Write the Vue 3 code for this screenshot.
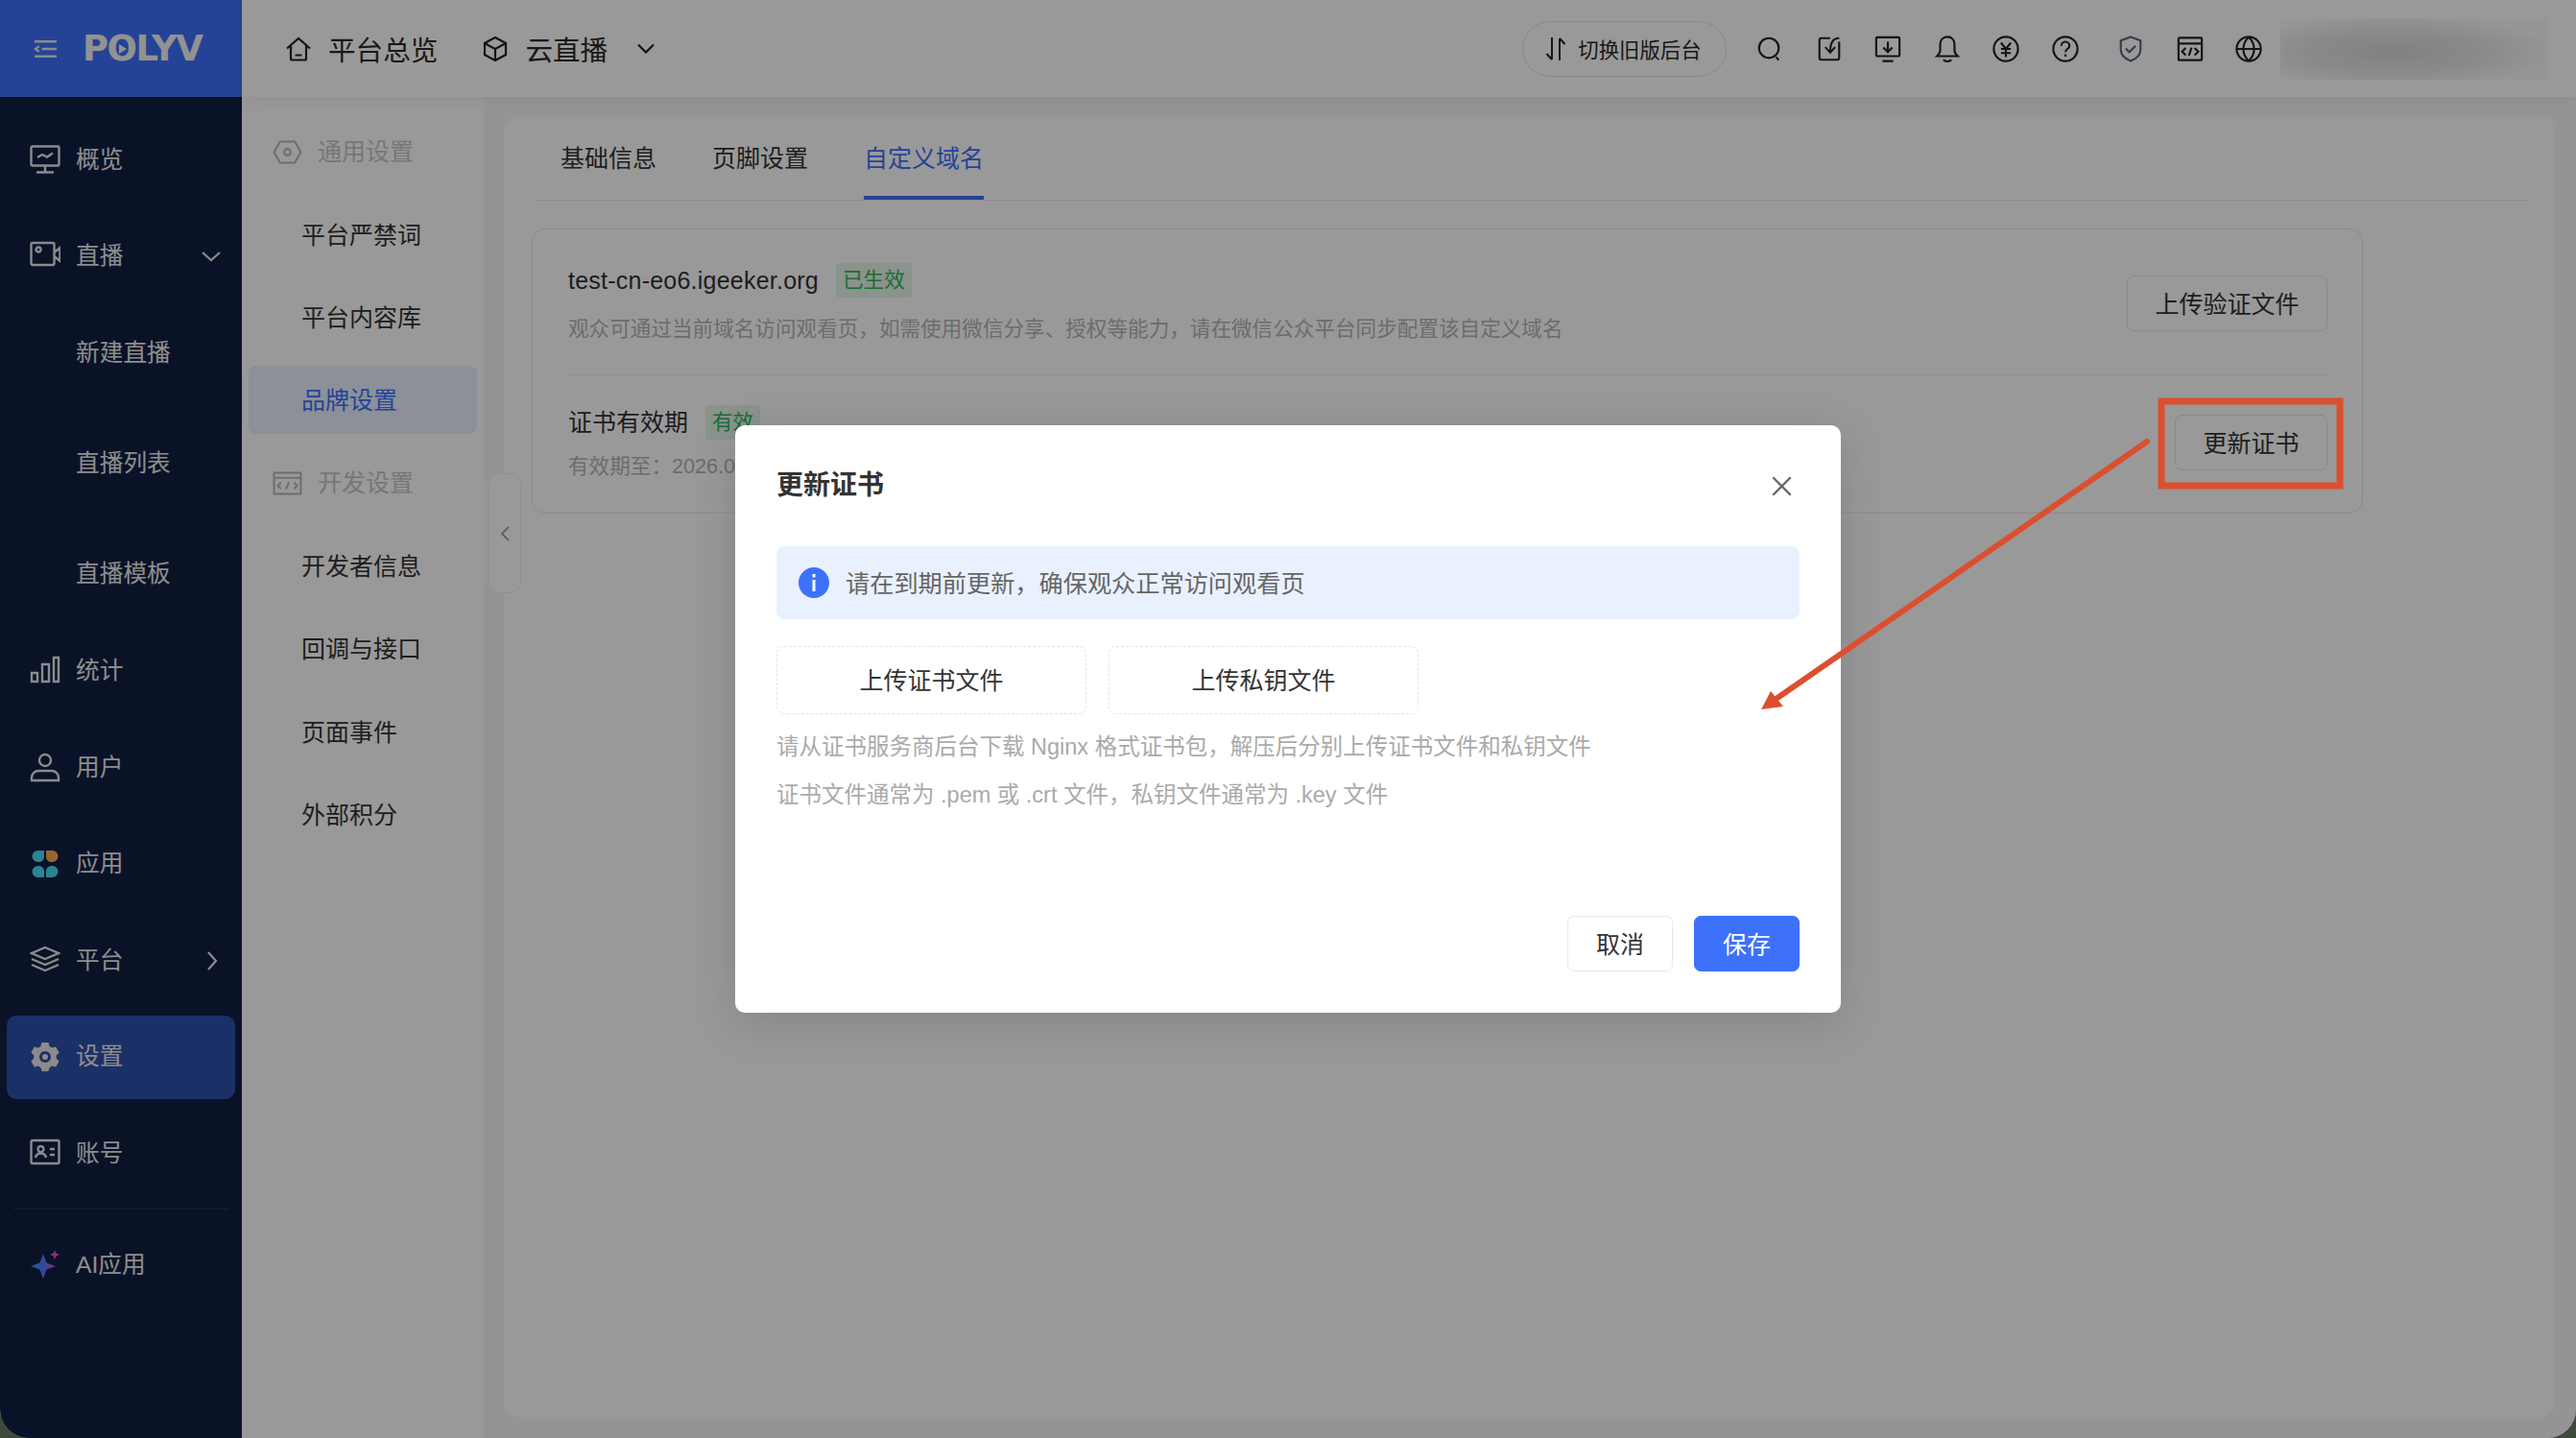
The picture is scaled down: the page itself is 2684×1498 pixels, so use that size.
<template>
  <div class="window">
    <aside class="sidebar">
      <div class="brand">
        <svg class="brand-menu" viewBox="0 0 26 22"><path d="M1 3h24M9 11h16M1 19h24M6 8l-4 3 4 3" /></svg>
        <span class="brand-name">POLYV</span>
      </div>
      <nav class="side-nav">
        <template v-for="item in sideItems" :key="item.label">
          <div class="side-item" :class="{ active: item.active }">
            <svg v-if="item.icon === 'apps'" class="side-icon" viewBox="0 0 32 32">
              <path class="teal" :d="petal" />
              <path class="orange" :d="petal" transform="matrix(-1 0 0 1 32 0)" />
              <path class="teal" :d="petal" transform="matrix(1 0 0 -1 0 32)" />
              <path class="teal" :d="petal" transform="matrix(-1 0 0 -1 32 32)" />
            </svg>
            <svg v-else-if="item.icon === 'gear'" class="side-icon" viewBox="0 0 32 32">
              <path class="gear" fill-rule="evenodd" d="M12.600 1h6.800l1.200 4 2.600 1.500 4-1 3.400 5.900-2.900 3v3.200l2.900 3-3.400 5.900-4-1-2.600 1.500-1.200 4h-6.800l-1.200-4-2.600-1.500-4 1-3.400-5.900 2.900-3v-3.200l-2.900-3 3.400-5.900 4 1 2.600-1.500zM16 10a6 6 0 1 0 0 12 6 6 0 0 0 0-12z" />
              <circle class="gear-hole" cx="16" cy="16" r="3" />
            </svg>
            <svg v-else-if="item.icon === 'spark'" class="side-icon" viewBox="0 0 32 32">
              <defs>
                <linearGradient id="sparkFill" x1="0" x2="1" y1="0.500" y2="0.500">
                  <stop offset="0" stop-color="#4f8cff" />
                  <stop offset="0.500" stop-color="#4f7cff" />
                  <stop offset="1" stop-color="#c04be0" />
                </linearGradient>
              </defs>
              <path class="spark" fill="url(#sparkFill)" d="M14 4l3.500 9.500L27 17l-9.500 3.500L14 30l-3.500-9.500L1 17l9.500-3.500z" />
              <path class="spark" fill="#e050d0" d="M26 0l1.500 3.500L31 5l-3.500 1.500L26 10l-1.500-3.500L21 5l3.500-1.500z" />
            </svg>
            <svg v-else class="side-icon" viewBox="0 0 32 32"><path :d="sideIcons[item.icon]" /></svg>
            <span class="side-label">{{ item.label }}</span>
            <svg v-if="item.open" class="side-caret" viewBox="0 0 20 12"><path d="M1 2l9 8 9-8" /></svg>
            <svg v-if="item.more" class="side-caret more" viewBox="0 0 12 20"><path d="M2 1l8 9-8 9" /></svg>
          </div>
          <div v-if="item.children" class="side-sub">
            <div v-for="child in item.children" :key="child" class="side-sub-item">{{ child }}</div>
          </div>
          <div v-if="item.rule" class="side-rule"></div>
        </template>
      </nav>
    </aside>

    <div class="main">
      <header class="topbar">
        <div class="top-link">
          <svg class="top-link-icon" viewBox="0 0 26 26"><path d="M1 12.500L13 2l12 10.500M5 10v13a1.500 1.500 0 0 0 1.500 1.500h13A1.500 1.500 0 0 0 21 23V10M9.500 19.500h7" /></svg>
          <span>平台总览</span>
        </div>
        <div class="top-link second">
          <svg class="top-link-icon" viewBox="0 0 26 26"><path d="M13 1l11 6v12l-11 6-11-6V7zM2 7l11 6 11-6M13 13v12" /></svg>
          <span>云直播</span>
          <svg class="top-caret" viewBox="0 0 18 11"><path d="M1 1.500l8 8 8-8" /></svg>
        </div>
        <div class="top-right">
          <div class="old-switch">
            <svg viewBox="0 0 22 26"><path d="M7 1v23M7 24l-5.500-6M15 25V2M15 2l5.500 6" /></svg>
            <span>切换旧版后台</span>
          </div>
          <div v-for="icon in topIcons" :key="icon.name" class="top-icon" :class="icon.name">
            <svg viewBox="0 0 30 30"><path :d="icon.d" /></svg>
          </div>
          <div class="account-blur"></div>
        </div>
      </header>

      <div class="body">
        <aside class="subnav">
          <template v-for="group in subGroups" :key="group.title">
            <div class="sub-title">
              <svg viewBox="0 0 32 26"><path :d="group.icon" /></svg>
              <span>{{ group.title }}</span>
            </div>
            <div
              v-for="link in group.links"
              :key="link"
              class="sub-link"
              :class="{ active: link === '品牌设置' }"
            >{{ link }}</div>
          </template>
        </aside>
        <div class="collapse-handle">
          <svg viewBox="0 0 10 18"><path d="M9 1L1 9l8 8" /></svg>
        </div>

        <section class="panel">
          <div class="tabs">
            <div class="tab">基础信息</div>
            <div class="tab">页脚设置</div>
            <div class="tab current">自定义域名</div>
          </div>
          <div class="card">
            <div class="card-row first">
              <div>
                <div class="row-title">
                  <span class="domain">test-cn-eo6.igeeker.org</span>
                  <em class="tag">已生效</em>
                </div>
                <p class="row-desc">观众可通过当前域名访问观看页，如需使用微信分享、授权等能力，请在微信公众平台同步配置该自定义域名</p>
              </div>
              <button class="btn wide">上传验证文件</button>
            </div>
            <div class="card-row second">
              <div>
                <div class="row-title">
                  <span>证书有效期</span>
                  <em class="tag">有效</em>
                </div>
                <p class="row-desc close">有效期至：2026.09.18</p>
              </div>
              <button class="btn">更新证书</button>
            </div>
          </div>
        </section>
      </div>
    </div>

    <div class="mask">
      <div class="dialog">
        <div class="dialog-head">
          <h2>更新证书</h2>
          <svg viewBox="0 0 20 20"><path d="M2 2l16 16M18 2L2 18" /></svg>
        </div>
        <div class="notice">
          <svg viewBox="0 0 32 32">
            <circle cx="16" cy="16" r="16" fill="#3e71fa" />
            <rect x="14.500" y="7" width="3" height="3.500" fill="#fff" />
            <rect x="14.500" y="13" width="3" height="12" fill="#fff" />
          </svg>
          <span>请在到期前更新，确保观众正常访问观看页</span>
        </div>
        <div class="uploads">
          <div class="upload">上传证书文件</div>
          <div class="upload">上传私钥文件</div>
        </div>
        <div class="hints">
          <p>请从证书服务商后台下载 Nginx 格式证书包，解压后分别上传证书文件和私钥文件</p>
          <p>证书文件通常为 .pem 或 .crt 文件，私钥文件通常为 .key 文件</p>
        </div>
        <div class="dialog-foot">
          <button class="foot-btn">取消</button>
          <button class="foot-btn primary">保存</button>
        </div>
      </div>
    </div>

    <!-- 红色标注 -->
    <svg class="markup" viewBox="0 0 2684 1498">
      <rect x="2252" y="418" width="186" height="88" />
      <line x1="2237" y1="460" x2="1852" y2="727" />
      <polygon points="1835,739 1845,720 1858,736" />
    </svg>
  </div>
</template>

<script setup>
const petal = 'M8.500 2H15v6.500a5.500 5.500 0 0 1-5.500 5.500h-1a6 6 0 0 1 0-12z'

const sideIcons = {
  monitor: 'M3 1.500h26a1.500 1.500 0 0 1 1.500 1.500v17a1.500 1.500 0 0 1-1.500 1.500H3A1.500 1.500 0 0 1 1.500 20V3A1.500 1.500 0 0 1 3 1.500zM16 21.500V28M7 28.500h18M8 13l5-3 5 2.500 6-4',
  camera: 'M3 2h21a1.500 1.500 0 0 1 1.500 1.500v20a1.500 1.500 0 0 1-1.500 1.500H3a1.500 1.500 0 0 1-1.500-1.500v-20A1.500 1.500 0 0 1 3 2zM25.500 12l6-5v14l-6-5M9 6.500a2.500 2.500 0 1 0 0 5 2.500 2.500 0 0 0 0-5z',
  chart: 'M2 18h6v9H2zM13 9h7v18h-7zM25 2h5v25h-5z',
  user: 'M16 2a6 6 0 1 0 0 12 6 6 0 0 0 0-12zM2 29v-3a7 7 0 0 1 7-7h14a7 7 0 0 1 7 7v3z',
  layers: 'M16 2l14 6-14 6-14-6zM2 14l14 6 14-6M2 20l14 6 14-6',
  card: 'M3 2h26a1.500 1.500 0 0 1 1.500 1.500v21a1.500 1.500 0 0 1-1.500 1.500H3a1.500 1.500 0 0 1-1.500-1.500v-21A1.500 1.500 0 0 1 3 2zM11.500 8a3 3 0 1 0 0 6 3 3 0 0 0 0-6zM6 20c.5-3 3-4.500 5.500-4.500S16.500 17 17 20M21 11h5M21 17h5'
}

const sideItems = [
  { label: '概览', icon: 'monitor' },
  { label: '直播', icon: 'camera', open: true, children: ['新建直播', '直播列表', '直播模板'] },
  { label: '统计', icon: 'chart' },
  { label: '用户', icon: 'user' },
  { label: '应用', icon: 'apps' },
  { label: '平台', icon: 'layers', more: true },
  { label: '设置', icon: 'gear', active: true },
  { label: '账号', icon: 'card', rule: true },
  { label: 'AI应用', icon: 'spark' }
]

const topIcons = [
  { name: 'search', d: 'M14 3a11 11 0 1 0 0 22 11 11 0 0 0 0-22zM22 24l3 3.500' },
  { name: 'tasks', d: 'M16 3H6a2 2 0 0 0-2 2v20a2 2 0 0 0 2 2h18a2 2 0 0 0 2-2V7M26 3c-7 0-10 5-10 15M10.500 13l5.500 6 5.500-6' },
  { name: 'down', d: 'M3 2h24a1 1 0 0 1 1 1v19a1 1 0 0 1-1 1H3a1 1 0 0 1-1-1V3a1 1 0 0 1 1-1zM15 7v11M10 13.500l5 5 5-5M9 28.500h12' },
  { name: 'bell', d: 'M15 1.500c-5 0-8 3.500-8 9v6c0 3-2 5-3.500 6.500h23c-1.500-1.500-3.500-3.500-3.500-6.500v-6c0-5.500-3-9-8-9zM10.500 27c2.500 2.500 6.500 2.500 9 0' },
  { name: 'yen', d: 'M15 1.500a13.500 13.500 0 1 0 0 27 13.500 13.500 0 0 0 0-27zM9.500 8l5.500 7 5.500-7M15 15v9M9.500 15h11M9.500 19.500h11' },
  { name: 'help', d: 'M15 1.500a13.500 13.500 0 1 0 0 27 13.500 13.500 0 0 0 0-27zM10.500 11.500c0-2.500 2-4.500 4.500-4.500s4.500 2 4.500 4.500c0 3.500-4.500 3.500-4.500 7M15 21v2.500' },
  { name: 'shield', d: 'M15 1.500l11 4v10c0 6-5 10.500-11 13-6-2.500-11-7-11-13v-10zM9.500 14.500l4 4 7-7' },
  { name: 'code', d: 'M3 2.500h24a1 1 0 0 1 1 1v23a1 1 0 0 1-1 1H3a1 1 0 0 1-1-1v-23a1 1 0 0 1 1-1zM2 9h26M10 14l-4 4 4 4M20 14l4 4-4 4M16.500 13.500l-3 9' },
  { name: 'globe', d: 'M15 1.500a13.500 13.500 0 1 0 0 27 13.500 13.500 0 0 0 0-27zM15 1.500c-8 8-8 19 0 27 8-8 8-19 0-27zM1.500 15h27' }
]

const subGroups = [
  {
    title: '通用设置',
    icon: 'M8 1.500h16L30.500 13 24 24.500H8L1.500 13zM16 9.500a3.500 3.500 0 1 0 0 7 3.500 3.500 0 0 0 0-7z',
    links: ['平台严禁词', '平台内容库', '品牌设置']
  },
  {
    title: '开发设置',
    icon: 'M2 1.500h28a.5.5 0 0 1 .5.5v22a.5.5 0 0 1-.5.5H2a.5.5 0 0 1-.5-.5V2a.5.5 0 0 1 .5-.5zM1.500 7h29M9 12l-3.500 3.500L9 19M23 12l3.500 3.500L23 19M17.500 11.500l-3 8',
    links: ['开发者信息', '回调与接口', '页面事件', '外部积分']
  }
]
</script>

<style>
html,
body {
  margin: 0;
  background: #3d4a3c;
}
</style>

<style scoped>
.window {
  position: relative;
  display: flex;
  width: 2684px;
  height: 1498px;
  overflow: hidden;
  border-radius: 0 0 30px 30px;
  background: #f7f7f8;
  font-family: "Liberation Sans", "Noto Sans CJK SC", sans-serif;
  font-size: 25px;
  color: #333;
}

/* 左侧主导航 */
.sidebar {
  flex: none;
  width: 252px;
  background: #111e43;
  color: #ececec;
}

.brand {
  display: flex;
  align-items: center;
  gap: 26px;
  height: 101px;
  padding-left: 35px;
  box-sizing: border-box;
  background: #3e71fa;
}

.brand-menu {
  width: 25px;
  height: 22px;
  fill: none;
  stroke: #e8e8e8;
  stroke-width: 2.500;
}

.brand-name {
  position: relative;
  font-family: "DejaVu Sans", sans-serif;
  font-size: 37px;
  font-weight: 700;
  line-height: 40px;
  letter-spacing: -1.500px;
  color: #f4f4f4;
}

/* O 里的播放三角 */
.brand-name::after {
  content: "";
  position: absolute;
  top: 15px;
  left: 38px;
  border-top: 5px solid transparent;
  border-bottom: 5px solid transparent;
  border-left: 8px solid #f4f4f4;
}

.side-nav {
  display: flex;
  flex-direction: column;
  gap: 14px;
  padding-top: 22.500px;
}

.side-item {
  display: flex;
  align-items: center;
  flex: none;
  height: 86.600px;
  margin: 0 7px;
  padding-left: 24px;
  border-radius: 10px;
  box-sizing: border-box;
  font-size: 24.700px;
}

.side-item.active {
  background: #2f50ad;
}

.side-icon {
  flex: none;
  width: 32px;
  height: 32px;
  margin-right: 16px;
  fill: none;
  stroke: #e8e8e8;
  stroke-width: 2.400;
}

.side-icon .teal {
  fill: #46dcf4;
  stroke: none;
}

.side-icon .orange {
  fill: #ffab55;
  stroke: none;
}

.side-icon .gear {
  fill: #e8e8e8;
  stroke: none;
}

.side-icon .gear-hole {
  fill: #e8e8e8;
  stroke: none;
}

.side-icon .spark {
  stroke: none;
}

.side-label {
  line-height: 34px;
}

.side-caret {
  width: 20px;
  height: 12px;
  margin-left: auto;
  margin-right: 15px;
  fill: none;
  stroke: #e8e8e8;
  stroke-width: 2.200;
}

.side-caret.more {
  width: 12px;
  height: 20px;
  margin-right: 18px;
}

.side-sub {
  margin: -14px 0;
}

.side-sub-item {
  height: 115px;
  padding-left: 79px;
  font-size: 24.700px;
  line-height: 113px;
}

.side-rule {
  height: 1px;
  margin: 0 14px;
  background: #2a3555;
}

/* 顶栏 */
.main {
  display: flex;
  flex: 1;
  flex-direction: column;
  min-width: 0;
}

.topbar {
  position: relative;
  z-index: 1;
  display: flex;
  flex: none;
  align-items: center;
  height: 101px;
  padding-left: 46px;
  box-sizing: border-box;
  background: #fff;
  box-shadow: 0 2px 16px rgba(0, 0, 0, 0.07);
  font-size: 28.600px;
  color: #2a2a2a;
}

.top-link {
  display: flex;
  align-items: center;
  gap: 18px;
}

.top-link.second {
  margin-left: 47px;
}

.top-link-icon {
  width: 26px;
  height: 26px;
  fill: none;
  stroke: #222;
  stroke-width: 2.200;
}

.top-caret {
  width: 18px;
  height: 11px;
  margin-left: 13px;
  fill: none;
  stroke: #222;
  stroke-width: 2.200;
}

.top-right {
  display: flex;
  align-items: center;
  margin-left: auto;
  padding-right: 28px;
}

.old-switch {
  display: flex;
  align-items: center;
  gap: 12px;
  width: 213px;
  height: 58px;
  margin-right: 14px;
  padding-left: 23px;
  border: 1px solid #e2e2e2;
  border-radius: 29px;
  box-sizing: border-box;
  font-size: 21.400px;
  white-space: nowrap;
}

.old-switch svg {
  flex: none;
  width: 22px;
  height: 26px;
  fill: none;
  stroke: #222;
  stroke-width: 2;
}

.top-icon {
  display: flex;
  align-items: center;
  justify-content: center;
  width: 61.600px;
}

.top-icon.shield {
  margin-left: 6.400px;
}

.top-icon svg {
  width: 28px;
  height: 28px;
  fill: none;
  stroke: #222;
  stroke-width: 2.300;
}

.top-icon.shield svg {
  stroke: #5a6880;
}

.account-blur {
  width: 280px;
  height: 64px;
  margin-left: 2px;
  background: radial-gradient(ellipse 60% 60% at 42% 55%, #d8d8d8 0%, #e6e6e6 55%, #fafafa 100%);
}

/* 二级导航和内容 */
.body {
  position: relative;
  display: flex;
  flex: 1;
  min-height: 0;
}

.subnav {
  display: flex;
  flex: none;
  flex-direction: column;
  gap: 15.300px;
  width: 252px;
  padding: 21.500px 7px 0;
  box-sizing: border-box;
  background: #fff;
}

.sub-title,
.sub-link {
  flex: none;
  height: 71px;
  line-height: 73px;
  border-radius: 8px;
}

.sub-title {
  display: flex;
  align-items: center;
  gap: 16px;
  padding-left: 25px;
  color: #c6c6c6;
}

.sub-title svg {
  width: 31px;
  height: 25px;
  fill: none;
  stroke: #b8b8b8;
  stroke-width: 2.200;
}

.sub-link {
  padding-left: 55px;
}

.sub-link.active {
  background: #e8f0ff;
  color: #3e71fa;
}

.collapse-handle {
  position: absolute;
  top: 392px;
  left: 257px;
  display: flex;
  align-items: center;
  justify-content: center;
  width: 34px;
  height: 125px;
  border: 1px solid #f0f0f0;
  border-radius: 12px;
  box-sizing: border-box;
  background: #fff;
}

.collapse-handle svg {
  width: 9px;
  height: 16px;
  fill: none;
  stroke: #999;
  stroke-width: 2;
}

.panel {
  flex: 1;
  margin: 21px 22px 22px 21px;
  padding: 0 28px 0 29px;
  border-radius: 14px;
  background: #fff;
}

.tabs {
  display: flex;
  gap: 58px;
  padding-left: 30px;
  border-bottom: 1px solid #eaeaea;
}

.tab {
  height: 86px;
  padding-top: 4px;
  box-sizing: border-box;
  line-height: 78px;
  border-bottom: 4px solid transparent;
}

.tab.current {
  border-bottom-color: #3e71fa;
  color: #3e71fa;
}

.card {
  width: 1908px;
  margin-top: 29px;
  padding: 0 36px 0 37px;
  border: 1px solid #e8e8e8;
  border-radius: 14px;
  box-sizing: border-box;
}

.card-row {
  display: flex;
  align-items: center;
  justify-content: space-between;
}

.card-row.first {
  padding: 35px 0 30px;
  border-bottom: 1px solid #ececec;
}

.card-row.second {
  padding: 31px 0 31px;
}

.row-title {
  display: flex;
  align-items: center;
  gap: 18px;
  height: 36px;
  line-height: 36px;
}

.domain {
  letter-spacing: 0.230px;
}

.tag {
  height: 36px;
  padding: 0 7px;
  border-radius: 4px;
  background: #e6f5ea;
  font-size: 21.600px;
  font-style: normal;
  color: #2fb457;
}

.row-desc {
  margin: 16px 0 0;
  font-size: 21.600px;
  line-height: 34px;
  color: #b4b4b4;
}

.row-desc.close {
  margin-top: 11px;
}

.btn {
  width: 159px;
  height: 58px;
  margin-bottom: 3px;
  padding: 0 0 2px;
  border: 1px solid #e6e6e6;
  border-radius: 7px;
  background: #fff;
  font: inherit;
  color: #333;
}

.btn.wide {
  width: 209px;
}

/* 弹窗 */
.mask {
  position: absolute;
  inset: 0;
  z-index: 2;
  display: flex;
  align-items: center;
  justify-content: center;
  background: rgba(0, 0, 0, 0.4);
}

.dialog {
  display: flex;
  flex-direction: column;
  width: 1152px;
  height: 612px;
  padding: 43px 43px;
  border-radius: 10px;
  box-sizing: border-box;
  background: #fff;
  box-shadow: 0 10px 50px rgba(0, 0, 0, 0.14);
}

.dialog-head {
  display: flex;
  align-items: center;
  justify-content: space-between;
  height: 40px;
  margin-bottom: 43px;
}

.dialog-head h2 {
  margin: 0;
  font-size: 28px;
  font-weight: 600;
  line-height: 42px;
}

.dialog-head svg {
  width: 23px;
  height: 23px;
  margin-right: 7px;
  fill: none;
  stroke: #666;
  stroke-width: 2;
}

.notice {
  display: flex;
  flex: none;
  align-items: center;
  gap: 17px;
  height: 76px;
  padding-left: 23px;
  border-radius: 8px;
  box-sizing: border-box;
  background: #eaf1fe;
  font-size: 25.200px;
  color: #666;
}

.notice span {
  padding-bottom: 2px;
}

.notice svg {
  width: 32px;
  height: 32px;
}

.uploads {
  display: flex;
  gap: 23px;
  margin-top: 28px;
}

.upload {
  width: 323px;
  height: 71px;
  border: 1px dashed #e4e4e4;
  border-radius: 8px;
  box-sizing: border-box;
  text-align: center;
  line-height: 71px;
}

.hints {
  margin-top: 9px;
  font-size: 23.500px;
  color: #aaa;
}

.hints p {
  margin: 0;
  line-height: 50px;
}

.dialog-foot {
  display: flex;
  justify-content: flex-end;
  gap: 22px;
  margin-top: auto;
}

.foot-btn {
  width: 110px;
  height: 58px;
  padding: 0 0 2px;
  border: 1px solid #e8e8e8;
  border-radius: 7px;
  background: #fff;
  font: inherit;
  color: #333;
}

.foot-btn.primary {
  border-color: #3e71fa;
  background: #3e71fa;
  color: #fff;
}

.markup {
  position: absolute;
  inset: 0;
  z-index: 3;
  width: 2684px;
  height: 1498px;
  pointer-events: none;
}

.markup rect {
  fill: none;
  stroke: #dc4f2e;
  stroke-width: 7;
}

.markup line {
  stroke: #dc4f2e;
  stroke-width: 6;
  stroke-linecap: round;
}

.markup polygon {
  fill: #dc4f2e;
}
</style>
